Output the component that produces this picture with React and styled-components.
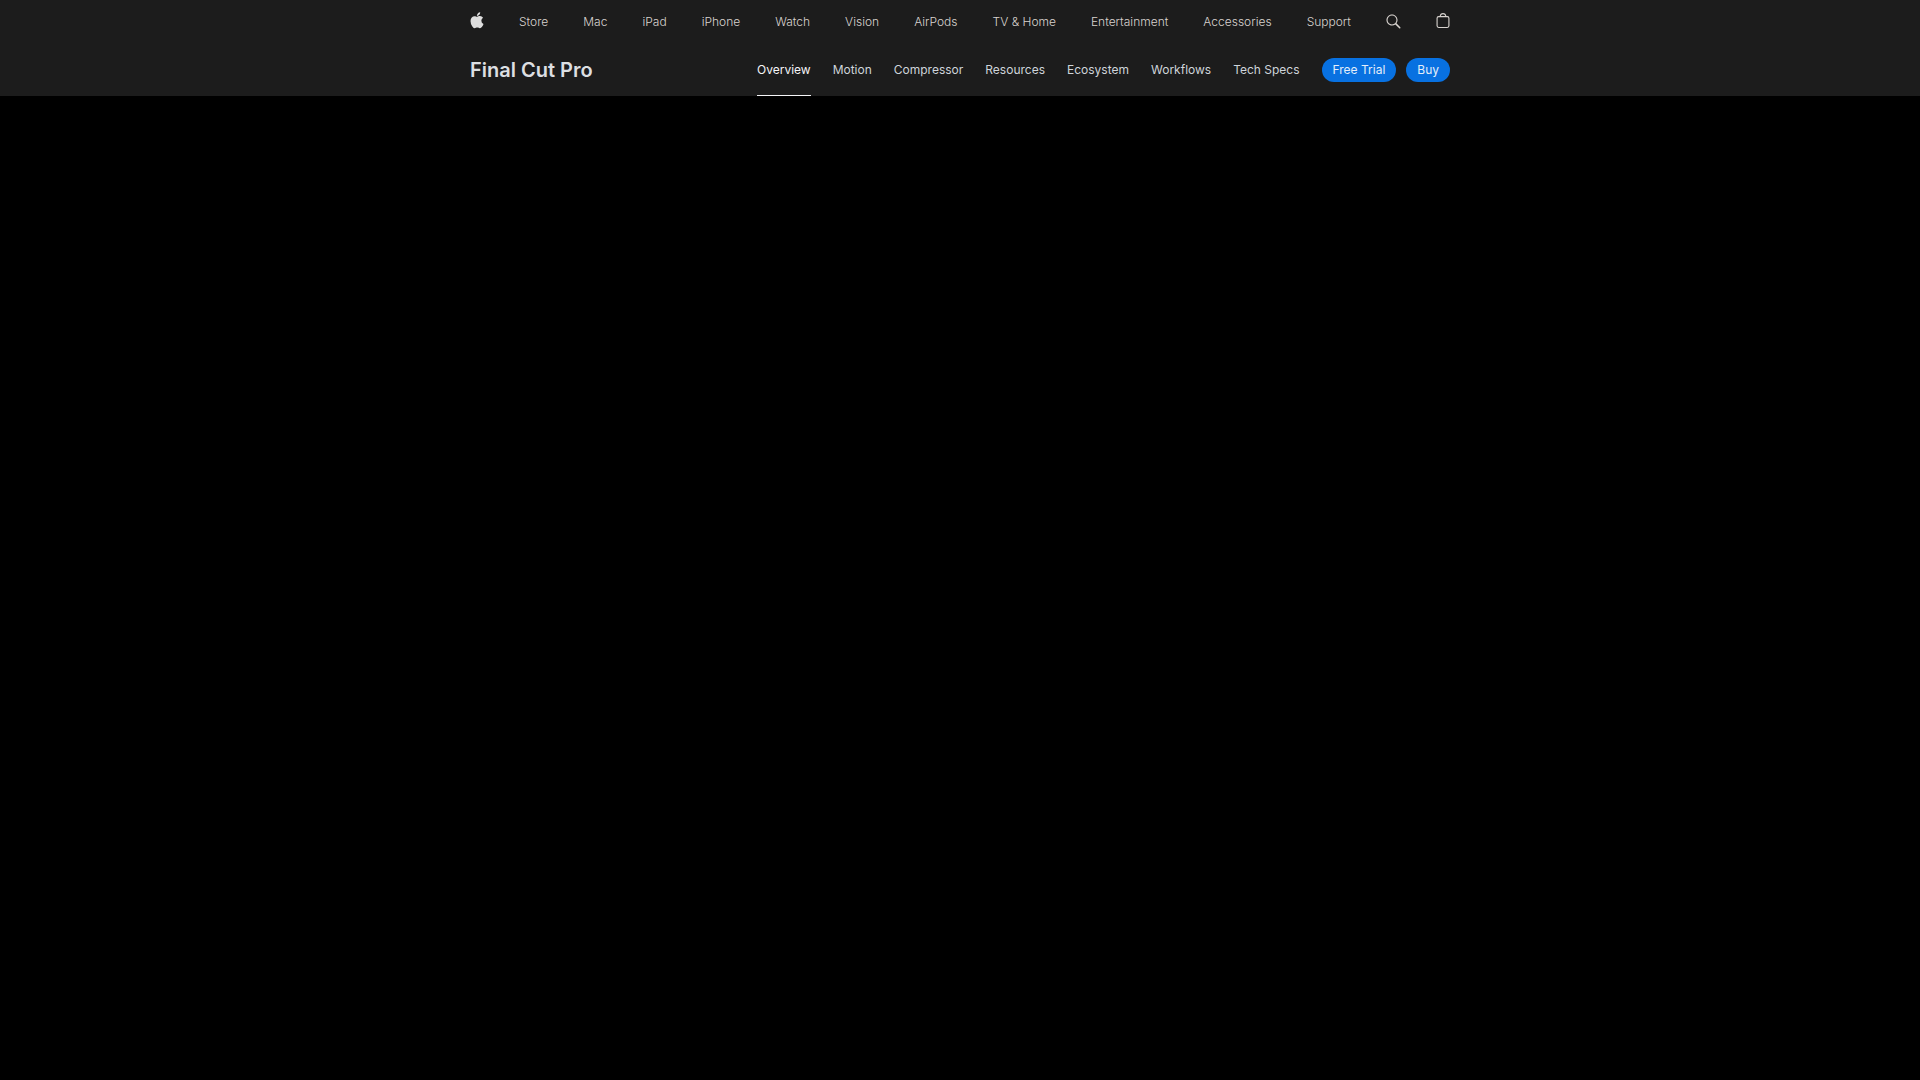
import React from "react";
import styled, { createGlobalStyle } from "styled-components";

const GlobalStyle = createGlobalStyle`
  body {
    margin: 0;
    background: #000;
    font-family: Inter, "Liberation Sans", sans-serif;
  }
`;

const Bar = styled.nav`
  background: #1c1c1c;
  padding: 0 22px;
`;

const BarContent = styled.div`
  display: flex;
  align-items: center;
  justify-content: space-between;
  max-width: 980px;
  height: ${({ $height }) => $height}px;
  margin: 0 auto;
`;

const GlobalLink = styled.a`
  display: flex;
  color: #d8d3cf;
  font-size: 12px;
  font-weight: 300;
  line-height: 44px;
  text-decoration: none;
  white-space: nowrap;

  svg {
    display: block;
    fill: currentColor;
  }
`;

const LogoLink = styled(GlobalLink)`
  color: #dedede;
`;

const ProductTitle = styled.a`
  color: #dcdfe2;
  font-size: 20px;
  font-weight: 600;
  line-height: 52px;
  text-decoration: none;
  white-space: nowrap;
`;

const LocalMenu = styled.div`
  display: flex;
  align-items: center;
  gap: 22px;
`;

const LocalLink = styled.a`
  box-sizing: border-box;
  height: 52px;
  border-bottom: 1px solid ${({ $current }) => ($current ? "#f5f5f7" : "transparent")};
  color: ${({ $current }) => ($current ? "#f5f5f7" : "#ced4da")};
  font-size: 12px;
  line-height: 52px;
  text-decoration: none;
  white-space: nowrap;
`;

const Actions = styled.div`
  display: flex;
  gap: 10px;
`;

const ActionButton = styled.button`
  height: 24px;
  padding: 0 11px;
  border: 0;
  border-radius: 12px;
  background: #0871e1;
  color: #e4eefa;
  font-family: inherit;
  font-size: 12px;
  line-height: 24px;
  white-space: nowrap;
`;

const globalItems = [
  "Store",
  "Mac",
  "iPad",
  "iPhone",
  "Watch",
  "Vision",
  "AirPods",
  "TV & Home",
  "Entertainment",
  "Accessories",
  "Support",
];

const localItems = [
  "Overview",
  "Motion",
  "Compressor",
  "Resources",
  "Ecosystem",
  "Workflows",
  "Tech Specs",
];

const AppleLogo = () => (
  <svg width="14" height="44" viewBox="0 0 14 44" aria-hidden="true">
    <path d="m13.0729 17.6825a3.61 3.61 0 0 0 -1.7248 3.0365 3.5132 3.5132 0 0 0 2.1379 3.2223 8.394 8.394 0 0 1 -1.0948 2.2618c-.6816.9812-1.3943 1.9623-2.4787 1.9623s-1.3633-.63-2.613-.63c-1.2187 0-1.6525.6507-2.644.6507s-1.6834-.9089-2.4787-2.0243a9.7842 9.7842 0 0 1 -1.6628-5.2776c0-3.0984 2.014-4.7405 3.9969-4.7405 1.0535 0 1.9314.6919 2.5924.6919.63 0 1.6112-.7333 2.8092-.7333a3.7579 3.7579 0 0 1 3.1604 1.5802zm-3.7284-2.8918a3.5615 3.5615 0 0 0 .8469-2.22 1.5353 1.5353 0 0 0 -.031-.32 3.5686 3.5686 0 0 0 -2.3445 1.2084 3.4629 3.4629 0 0 0 -.8779 2.1585 1.419 1.419 0 0 0 .031.2892 1.19 1.19 0 0 0 .2169.0207 3.0935 3.0935 0 0 0 2.1586-1.1368z" />
  </svg>
);

const SearchIcon = () => (
  <svg width="15" height="44" viewBox="0 0 15 44" aria-hidden="true">
    <path d="M14.298,27.202l-3.87-3.87c0.701-0.929,1.122-2.081,1.122-3.332c0-3.06-2.489-5.55-5.55-5.55c-3.06,0-5.55,2.49-5.55,5.55c0,3.061,2.49,5.55,5.55,5.55c1.251,0,2.403-0.421,3.332-1.122l3.87,3.87c0.151,0.151,0.35,0.228,0.548,0.228s0.396-0.076,0.548-0.228C14.601,27.995,14.601,27.505,14.298,27.202z M1.55,20c0-2.454,1.997-4.45,4.45-4.45c2.454,0,4.45,1.997,4.45,4.45S8.454,24.45,6,24.45C3.546,24.45,1.55,22.454,1.55,20z" />
  </svg>
);

const BagIcon = () => (
  <svg width="14" height="44" viewBox="0 0 14 44" aria-hidden="true">
    <path d="m11.3535 16.0283h-1.0205a3.4229 3.4229 0 0 0 -3.333-2.9648 3.4229 3.4229 0 0 0 -3.333 2.9648h-1.02a2.1184 2.1184 0 0 0 -2.117 2.1162v7.7155a2.1186 2.1186 0 0 0 2.1162 2.1167h8.707a2.1186 2.1186 0 0 0 2.1168-2.1167v-7.7155a2.1184 2.1184 0 0 0 -2.1165-2.1162zm-4.3535-1.8652a2.3169 2.3169 0 0 1 2.2222 1.8652h-4.4444a2.3169 2.3169 0 0 1 2.2222-1.8652zm5.37 11.6969a1.0182 1.0182 0 0 1 -1.0166 1.0171h-8.7069a1.0182 1.0182 0 0 1 -1.0165-1.0171v-7.7155a1.0178 1.0178 0 0 1 1.0166-1.0166h8.707a1.0178 1.0178 0 0 1 1.0164 1.0166z" />
  </svg>
);

export default function App() {
  return (
    <>
      <GlobalStyle />
      <header>
        <Bar aria-label="Global">
          <BarContent $height={44}>
            <LogoLink href="#" aria-label="Apple">
              <AppleLogo />
            </LogoLink>
            {globalItems.map((item) => (
              <GlobalLink key={item} href="#">
                {item}
              </GlobalLink>
            ))}
            <GlobalLink href="#" aria-label="Search">
              <SearchIcon />
            </GlobalLink>
            <GlobalLink href="#" aria-label="Shopping Bag">
              <BagIcon />
            </GlobalLink>
          </BarContent>
        </Bar>
        <Bar aria-label="Final Cut Pro">
          <BarContent $height={52}>
            <ProductTitle href="#">Final Cut Pro</ProductTitle>
            <LocalMenu>
              {localItems.map((item, index) => (
                <LocalLink
                  key={item}
                  href="#"
                  $current={index === 0}
                  aria-current={index === 0 ? "page" : undefined}
                >
                  {item}
                </LocalLink>
              ))}
              <Actions>
                <ActionButton type="button">Free Trial</ActionButton>
                <ActionButton type="button">Buy</ActionButton>
              </Actions>
            </LocalMenu>
          </BarContent>
        </Bar>
      </header>
    </>
  );
}
